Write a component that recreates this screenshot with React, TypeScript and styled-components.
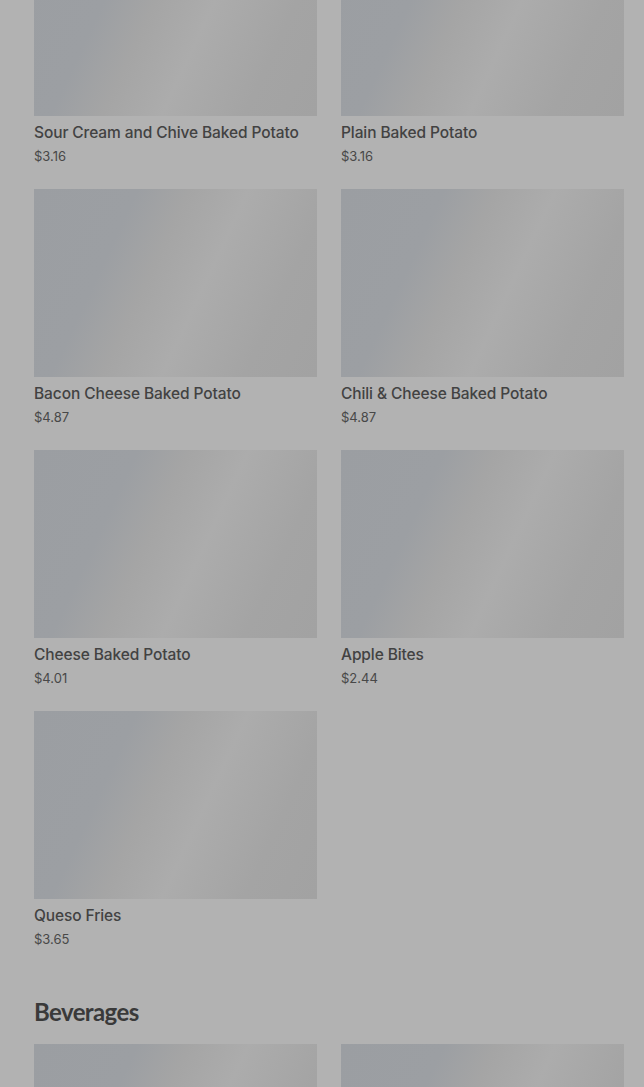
import React from "react";
import styled, { createGlobalStyle } from "styled-components";

const Global = createGlobalStyle`
  html, body { margin: 0; padding: 0; background: #b2b2b2; overflow: hidden; }
  body { font-family: Inter, "Noto Sans", sans-serif; }
`;

const Page = styled.div`
  padding: 0 20px 0 34px;
  margin-top: -72px;
`;

const Section = styled.section`
  display: flex;
  flex-direction: column;
`;

const Heading = styled.h2`
  margin: 0 0 17px;
  font-family: Lato, Inter, sans-serif;
  font-size: 24px;
  font-weight: 700;
  letter-spacing: -0.6px;
  color: #3a3a3a;
  line-height: 30px;
`;

const Grid = styled.div`
  display: grid;
  grid-template-columns: 283px 283px;
  column-gap: 24px;
  row-gap: 24px;
  margin-bottom: 49px;
`;

const Card = styled.div`
  display: flex;
  flex-direction: column;
`;

const Thumb = styled.div`
  height: 188px;
  background: linear-gradient(
    115deg,
    #9b9ea2 0%,
    #9c9fa3 28%,
    #a5a5a5 42%,
    #acacac 58%,
    #a4a4a4 80%,
    #a2a2a2 100%
  );
`;

const Name = styled.div`
  margin-top: 7px;
  font-size: 15.5px;
  line-height: 19px;
  font-weight: 500;
  color: #424242;
  letter-spacing: -0.1px;
`;

const Price = styled.div`
  margin-top: 5px;
  font-size: 13px;
  line-height: 18px;
  color: #484848;
`;

const sides = [
  ["Sour Cream and Chive Baked Potato", "$3.16"],
  ["Plain Baked Potato", "$3.16"],
  ["Bacon Cheese Baked Potato", "$4.87"],
  ["Chili & Cheese Baked Potato", "$4.87"],
  ["Cheese Baked Potato", "$4.01"],
  ["Apple Bites", "$2.44"],
  ["Queso Fries", "$3.65"],
];

const beverages = ["bev-1", "bev-2"];

export default function App() {
  return (
    <>
      <Global />
      <Page>
        <Section>
          <Grid>
            {sides.map(([n, p]) => (
              <Card key={n}>
                <Thumb />
                <Name>{n}</Name>
                <Price>{p}</Price>
              </Card>
            ))}
          </Grid>
        </Section>
        <Section>
          <Heading>Beverages</Heading>
          <Grid>
            {beverages.map((k) => (
              <Card key={k}>
                <Thumb />
              </Card>
            ))}
          </Grid>
        </Section>
      </Page>
    </>
  );
}
